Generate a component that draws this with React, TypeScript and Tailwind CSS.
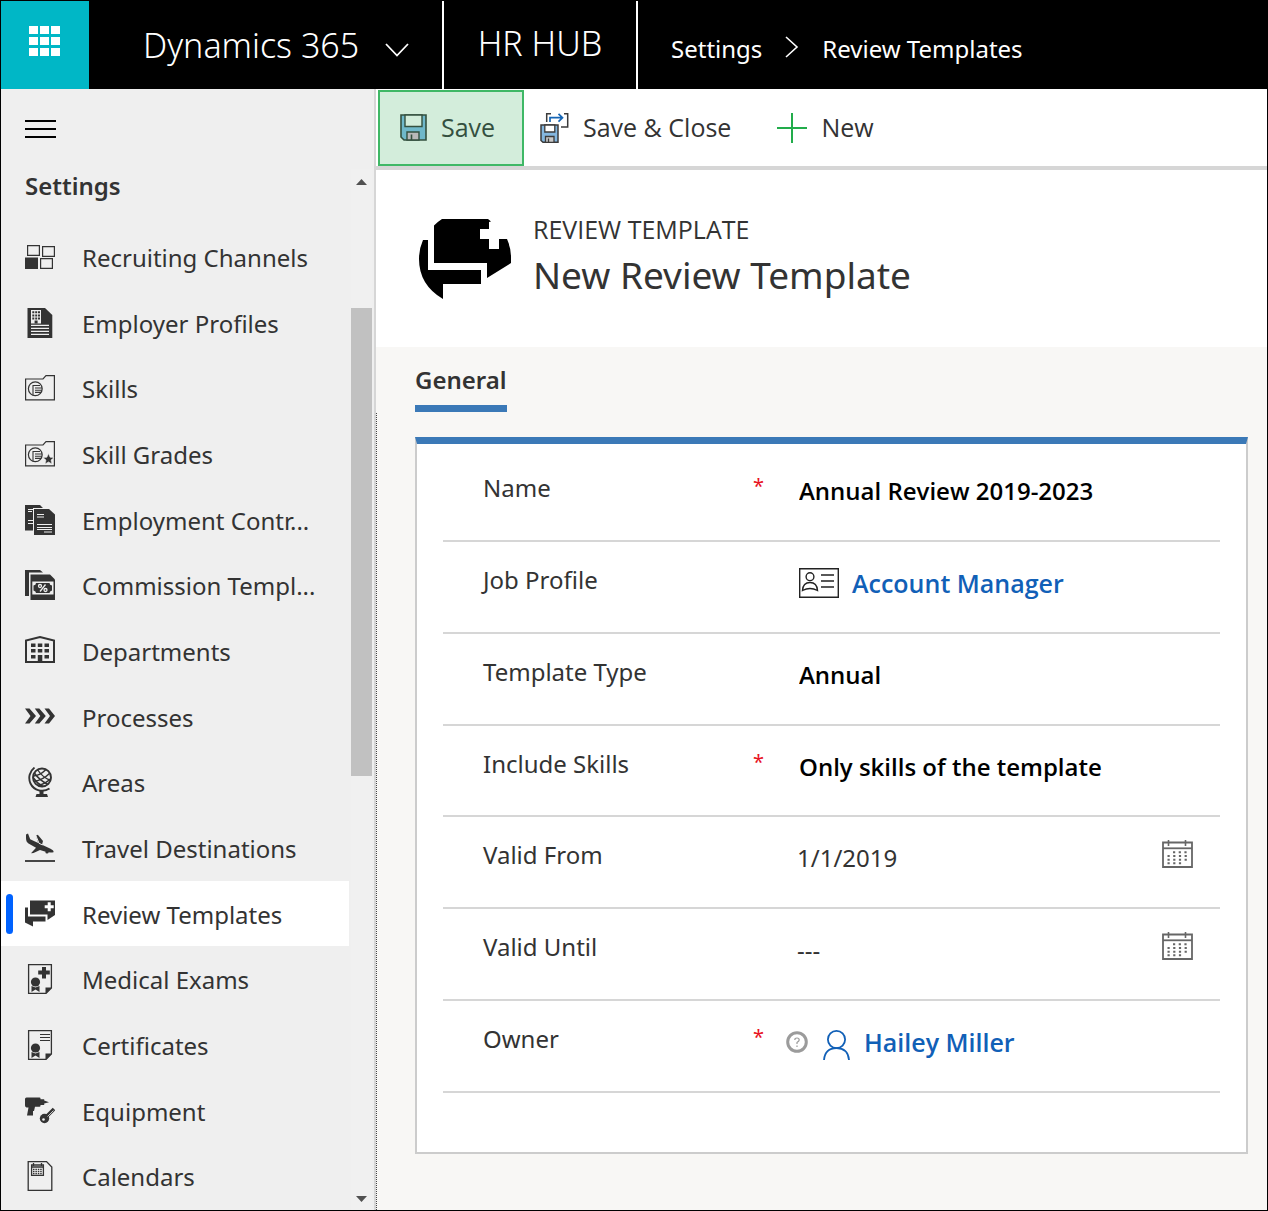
import { ReactNode } from 'react'

type NavEntry = {
  title: string
  icon: ReactNode
  active?: boolean
}

function Icon({ children }: { children: ReactNode }) {
  return (
    <svg
      width="30"
      height="30"
      viewBox="0 0 30 30"
      fill="currentColor"
      className="shrink-0"
      aria-hidden="true"
    >
      {children}
    </svg>
  )
}

function FolderShape() {
  return (
    <>
      <path
        d="M.6 6H18l3-3.300H29.400V26.800H.6z"
        fill="none"
        stroke="currentColor"
        strokeWidth="1.200"
      />
      <circle
        cx="10.300"
        cy="15.800"
        r="6.900"
        fill="none"
        stroke="currentColor"
        strokeWidth="1.200"
      />
      <path
        d="M8 22V12.500H15M10 15h7M10 17.200h7M10 19.400h6"
        fill="none"
        stroke="currentColor"
        strokeWidth="1.100"
      />
    </>
  )
}

function RibbonPage({ children }: { children: ReactNode }) {
  return (
    <Icon>
      <path
        d="M3.600.6H26.400V24L21 29.400H3.600z"
        fill="none"
        stroke="currentColor"
        strokeWidth="1.300"
      />
      <path d="M27 23.500h-6.500V30z" />
      <circle cx="10.500" cy="18" r="4.600" />
      <path d="M6.500 22l4 1.500 4-1.500v6l-4-2.500-4 2.500z" />
      {children}
    </Icon>
  )
}

const entries: NavEntry[] = [
  {
    title: 'Recruiting Channels',
    icon: (
      <Icon>
        <g fill="none" stroke="currentColor" strokeWidth="1.200">
          <path d="M2.600 3.600H14.400V13.400H2.600zM17.600 4.600H29.400V14.400H17.600zM15.600 16.600H27.400V26.400H15.600z" />
        </g>
        <path d="M0 15.500H13V27H0z" />
      </Icon>
    ),
  },
  {
    title: 'Employer Profiles',
    icon: (
      <Icon>
        <path d="M2.500 0H20l7.300 7V30H2.500z" />
        <path d="M6 2H16V15.500H6z" fill="#efefef" />
        <path d="M7.300 3.300h2v2h-2zM10.200 3.300h2v2h-2zM13 3.300h2v2h-2zM7.300 6.400h2v2h-2zM10.200 6.400h2v2h-2zM13 6.400h2v2h-2zM7.300 9.500h2v2h-2zM10.200 9.500h2v2h-2zM13 9.500h2v2h-2zM9.600 12.500h3v3h-3z" />
        <path
          d="M6 17.300H24M6 20.300H24M6 23.300H24M6 26.300H24"
          stroke="#efefef"
          strokeWidth="1.200"
        />
      </Icon>
    ),
  },
  {
    title: 'Skills',
    icon: (
      <Icon>
        <FolderShape />
      </Icon>
    ),
  },
  {
    title: 'Skill Grades',
    icon: (
      <Icon>
        <FolderShape />
        <path
          d="M23.500 14.500l1.600 3.700 4 .3-3.100 2.600 1 3.900-3.500-2.100-3.500 2.100 1-3.900-3.100-2.600 4-.3z"
          stroke="#efefef"
          strokeWidth=".6"
        />
      </Icon>
    ),
  },
  {
    title: 'Employment Contr...',
    icon: (
      <Icon>
        <path d="M0 0H15l3 3H8V25.500H0z" />
        <path d="M9 4H24l6 5.500V30H9z" />
        <path
          d="M3 4.500h5M3 6.500h4M3 15.500h5M3 18.500h5M12 9.500h7M12 12h7M12 19.500H27M12 22.500H27M12 24.500H27M19 27h8"
          stroke="#efefef"
        />
      </Icon>
    ),
  },
  {
    title: 'Commission Templ...',
    icon: (
      <Icon>
        <path d="M0 0H15l3 2.500H4V26H0z" />
        <path d="M5.500 4.500H25l5 5V30H5.500z" />
        <path d="M7.300 11.500H28.500V24.500H7.300z" fill="#efefef" />
        <path d="M11 13H24.500q0 2 2.500 2.500v5q-2.500.5-2.500 2.500H11q0-2-2.500-2.500v-5q2.500-.5 2.500-2.500z" />
        <g fill="none" stroke="#efefef" strokeWidth="1.300">
          <circle cx="15" cy="16" r="1.500" />
          <circle cx="20.500" cy="20" r="1.500" />
          <path d="M20.500 14.500l-5.500 7" />
        </g>
      </Icon>
    ),
  },
  {
    title: 'Departments',
    icon: (
      <Icon>
        <path
          d="M1 26V4.500L15 1l14 3.500V26z"
          fill="none"
          stroke="currentColor"
          strokeWidth="2"
        />
        <path d="M6 7.500h4.500V11H6zM12.800 7.500h4.500V11h-4.500zM19.500 7.500H24V11h-4.500zM6 13h4.500v3.500H6zM12.800 13h4.500v3.500h-4.500zM19.500 13H24v3.500h-4.500zM6 19h4.500v3.500H6zM12.800 19h4.500v7h-4.500zM19.500 19H24v3.500h-4.500z" />
      </Icon>
    ),
  },
  {
    title: 'Processes',
    icon: (
      <Icon>
        <path d="M0 6.500h4.500L11 14l-6.500 7.500H0L5.500 14zM9.800 6.500h4.500l6.500 7.500-6.500 7.500H9.800l5.500-7.500zM19.500 6.500H24L30 14l-6 7.500h-4.500L25 14z" />
      </Icon>
    ),
  },
  {
    title: 'Areas',
    icon: (
      <Icon>
        <g fill="none" stroke="currentColor">
          <circle cx="17" cy="10.500" r="9" strokeWidth="1.900" />
          <path
            d="M9.500.6A13 13 0 0 0 5.500 16.500A13 13 0 0 0 24.500 21.500"
            strokeWidth="1.900"
          />
          <path
            d="M9 5.500Q14 13 23 17.500M12.500 2.500Q17 10 25.500 13.500M8.500 11Q12 16.500 18 19.500"
            strokeWidth="1.400"
          />
          <path
            d="M8.500 9Q15 8.500 21 2.500M9 14.500Q18 13 25 6M13 18.500Q20 17 26 11.500"
            strokeWidth="1.500"
          />
        </g>
        <path d="M14.500 23.500h4v3.500H22l1 3H10.500l1-3h3z" />
      </Icon>
    ),
  },
  {
    title: 'Travel Destinations',
    icon: (
      <Icon>
        <path d="M1 1.500l2-1 2.200 5.700 8 3.800L11 2.800l1.800-1L18 8l-1 3.800 8.500 3.900q3.700 1.800 3 3.600-4.500.8-9.500-1L15 17l-6.500 3-2.500.2 5-5.500L3.500 10.500Q1 9 1 5z" />
        <path d="M11 2.800L14 10.300l3.500 1.600" stroke="#efefef" fill="none" />
        <circle cx="22" cy="19" r="1.600" />
        <path d="M0 28H30" stroke="currentColor" strokeWidth="1.800" />
      </Icon>
    ),
  },
  {
    title: 'Review Templates',
    active: true,
    icon: (
      <Icon>
        <path d="M5 1.500H30V16l-7.500 5V15.500H5z" />
        <path d="M0 8.500h3V17.500H20.500V22.500H8v5L0 23.500z" />
        <path d="M22.700 3.200h3v3h3v3h-3v3h-3v-3h-3v-3h3z" fill="#fff" />
      </Icon>
    ),
  },
  {
    title: 'Medical Exams',
    icon: (
      <RibbonPage>
        <path d="M17 3h4v3.500h3.800v4H21v4h-4v-4h-3.800v-4H17z" />
      </RibbonPage>
    ),
  },
  {
    title: 'Certificates',
    icon: (
      <RibbonPage>
        <path
          d="M15 4.500H25M15 7.500H25M15 10.500H25"
          stroke="currentColor"
          strokeWidth="1.200"
        />
      </RibbonPage>
    ),
  },
  {
    title: 'Equipment',
    icon: (
      <Icon>
        <path d="M0 3q0-1.500 1.500-1.500H14.500q1 0 1 1v.7h3.700v1.400L24 6.300l-4.800 1.300V9h-3.700v.8q0 1-1 1H10L9 15H8v4.500H2L3.500 11.500H1.500Q0 11 0 9.500z" />
        <circle cx="19.500" cy="22.500" r="4.700" />
        <path d="M22 20L29 13" stroke="currentColor" strokeWidth="3.500" />
        <path d="M22.500 20.500L28.500 14.500" stroke="#efefef" strokeWidth=".8" />
        <circle cx="18.500" cy="23.500" r="1.300" fill="#efefef" />
      </Icon>
    ),
  },
  {
    title: 'Calendars',
    icon: (
      <Icon>
        <path
          d="M3.200.6H21.500L26.800 6V29.400H3.200z"
          fill="none"
          stroke="currentColor"
          strokeWidth="1.300"
        />
        <path
          d="M6.600 4H18.400V14.400H6.600zM6.600 6H18.400M8.500 2V5M16.500 2V5"
          fill="none"
          stroke="currentColor"
          strokeWidth="1.300"
        />
        <path
          d="M8 8.300h9.500M8 10.400h9.500M8 12.500h9.500"
          stroke="currentColor"
          strokeWidth="1.300"
          strokeDasharray="1.500 .9"
        />
      </Icon>
    ),
  },
]

function SaveIcon() {
  return (
    <svg width="28" height="28" viewBox="0 0 28 28" aria-hidden="true">
      <path
        d="M1 1H26V26H4L1 23z"
        fill="#6fb8ca"
        stroke="#34503f"
        strokeWidth="1.600"
      />
      <path d="M5 1H22V12.500H5z" fill="#d3eddb" stroke="#34503f" strokeWidth="1.400" />
      <path d="M7 18H19V26H7z" fill="#b9b9b9" stroke="#34503f" strokeWidth="1.400" />
      <path d="M11.500 20.500V26" stroke="#34503f" strokeWidth="1.600" />
    </svg>
  )
}

function SaveCloseIcon() {
  return (
    <svg width="30" height="30" viewBox="0 0 30 30" fill="none" aria-hidden="true">
      <path
        d="M6.700 9V.800H11M24 .800h3.700V14H21"
        stroke="#3b3b3b"
        strokeWidth="1.500"
      />
      <path
        d="M10 9V4.700H22.500M18.500.800l4 3.900-4 3.900"
        stroke="#1565b5"
        strokeWidth="1.700"
      />
      <path d="M1 12H18V29.300H3L1 27.500z" fill="#84b7e0" stroke="#3b3b3b" strokeWidth="1.500" />
      <path d="M4.800 12H14.800V19H4.800z" fill="#fff" stroke="#3b3b3b" strokeWidth="1.300" />
      <path d="M5.500 23.500H14V29.300H5.500z" fill="#c8c8c8" stroke="#3b3b3b" strokeWidth="1.300" />
      <path d="M8.500 25.500v4" stroke="#3b3b3b" strokeWidth="1.300" />
    </svg>
  )
}

function CalendarIcon() {
  return (
    <svg width="31" height="28" viewBox="0 0 31 28" fill="none" stroke="#666" aria-hidden="true">
      <path d="M1 2.500H30V27H1z" strokeWidth="1.800" />
      <path d="M1 8.300H30" strokeWidth="1.800" />
      <path d="M6.500 0V6M23.500 0V6" strokeWidth="1.600" />
      <path
        d="M11 12.300H26M5.500 16H26M5.500 19.700H26M5.500 23.300H20"
        strokeWidth="2"
        strokeDasharray="2.200 3.500"
      />
    </svg>
  )
}

function Field({
  id,
  label,
  required,
  children,
}: {
  id: string
  label: string
  required?: boolean
  children: ReactNode
}) {
  return (
    <div className="flex flex-1 items-center border-b-2 border-[#d6d6d6] pb-3.5">
      <label htmlFor={id} className="w-[270px] shrink-0 pl-10 text-[#333]">
        {label}
      </label>
      <span className="w-[84px] shrink-0 pb-1 pl-10 text-xl text-[#e81123]">
        {required && '*'}
      </span>
      <div className="flex min-w-0 flex-1 items-center pt-1.5">{children}</div>
    </div>
  )
}

const valueClass =
  "w-full appearance-none bg-transparent pl-0.5 font-['Open_Sans',sans-serif] font-semibold text-black outline-none"

const linkClass =
  "font-['Open_Sans',sans-serif] text-[25px] leading-8 font-semibold text-[#1160b7]"

export default function App() {
  return (
    <div className="flex min-h-screen flex-col border border-black bg-white font-['Noto_Sans','Open_Sans',sans-serif] text-2xl text-[#333]">
      <header className="flex h-[88px] shrink-0 bg-black text-white">
        <button
          aria-label="Apps"
          className="flex w-[88px] items-center justify-center bg-[#00b7c6] pr-0.5 pb-2"
        >
          <svg width="31" height="30" viewBox="0 0 31 30" fill="#fff">
            <path d="M0 0h9v8H0zM11 0h9v8h-9zM22 0h9v8h-9zM0 11h9v8H0zM11 11h9v8h-9zM22 11h9v8h-9zM0 22h9v8H0zM11 22h9v8h-9zM22 22h9v8h-9z" />
          </svg>
        </button>
        <button className="flex w-[355px] items-center gap-[26px] border-r-2 border-white pt-0.5 pl-[54px] text-[34px] font-light">
          Dynamics 365
          <svg width="24" height="14" viewBox="0 0 24 14" fill="none" stroke="#fff" strokeWidth="1.800" className="mt-2">
            <path d="M1 1l11 11.500L23 1" />
          </svg>
        </button>
        <div className="flex w-[194px] items-center justify-center border-r-2 border-white pb-0.5 text-[34px] font-light">
          HR HUB
        </div>
        <nav className="flex items-center gap-[23px] pt-2 pl-[33px]" aria-label="Breadcrumb">
          <a href="#settings">Settings</a>
          <svg width="14" height="22" viewBox="0 0 14 22" fill="none" stroke="#fff" strokeWidth="1.600" className="mb-1">
            <path d="M1 1l11 10L1 21" />
          </svg>
          <a href="#templates">Review Templates</a>
        </nav>
      </header>

      <div className="flex flex-1">
        <aside className="flex w-[375px] shrink-0 flex-col border-r-2 border-[#d6d6d6] bg-[#efefef]">
          <div className="flex h-20 shrink-0 items-center pl-6">
            <button aria-label="Menu">
              <svg width="31" height="18" viewBox="0 0 31 18" stroke="#000" strokeWidth="2">
                <path d="M0 1H31M0 9H31M0 17H31" />
              </svg>
            </button>
          </div>
          <div className="flex flex-1">
            <nav className="flex w-[348px] flex-col pb-px">
              <h2 className="h-[55px] pt-px pl-6 font-semibold">Settings</h2>
              {entries.map(({ title, icon, active }) => (
                <a
                  key={title}
                  href="#nav"
                  className={
                    active
                      ? 'flex flex-1 items-center bg-white pl-[5px]'
                      : 'flex flex-1 items-center pl-6'
                  }
                >
                  {active && (
                    <span className="mr-3 h-10 w-[7px] rounded bg-[#0062ff]" />
                  )}
                  {icon}
                  <span className="pt-0.5 pl-[27px] whitespace-nowrap">{title}</span>
                </a>
              ))}
            </nav>
            <div className="ml-0.5 flex w-[21px] flex-col items-center bg-[#f0f0f0] pt-2.5 pb-2">
              <svg width="11" height="6" viewBox="0 0 11 6" fill="#505050">
                <path d="M0 6L5.500 0 11 6z" />
              </svg>
              <div className="mt-[123px] h-[468px] w-full bg-[#c1c1c1]" />
              <svg width="11" height="6" viewBox="0 0 11 6" fill="#505050" className="mt-auto">
                <path d="M0 0L5.500 6 11 0z" />
              </svg>
            </div>
          </div>
        </aside>

        <main className="flex min-w-0 flex-1 flex-col bg-[#f8f7f5]">
          <div className="flex h-[81px] shrink-0 items-start border-b-4 border-[#d6d6d6] bg-white pt-px pl-0.5 font-['Open_Sans',sans-serif] text-[25px]">
            <button className="flex h-[76px] w-[146px] items-center gap-[13px] border-2 border-[#3fb866] bg-[#d3eddb] pl-5 text-[#34503f]">
              <SaveIcon />
              Save
            </button>
            <button className="ml-4 flex h-[76px] items-center gap-[13px]">
              <SaveCloseIcon />
              Save &amp; Close
            </button>
            <button className="ml-[46px] flex h-[76px] items-center gap-[14px]">
              <svg width="30" height="30" viewBox="0 0 30 30" stroke="#22ac4b" strokeWidth="2">
                <path d="M15 0V30M0 15H30" />
              </svg>
              New
            </button>
          </div>

          <div className="flex h-[177px] shrink-0 items-center gap-[22px] bg-white pl-[43px]">
            <svg width="92" height="80" viewBox="0 0 92 80" aria-hidden="true">
              <path d="M15 6.500Q19 2.500 23 0H69L72 2.500 70 3V10H61V20H70V30H80V20H88Q92 29 92 38V44L68 59V44H15z" />
              <path d="M4 21H9V51H62V65H24V80Q0 66 0 40Q0 30 4 21z" />
            </svg>
            <div>
              <p className="font-['Open_Sans',sans-serif] text-[25px] leading-8">REVIEW TEMPLATE</p>
              <h1 className="text-[37px] leading-[60px]">New Review Template</h1>
            </div>
          </div>

          <div className="flex h-[66px] shrink-0 items-start pt-4 pl-[39px]" role="tablist">
            <button
              role="tab"
              aria-selected="true"
              className="h-[49px] border-b-[7px] border-[#3b79b7] pb-2 font-semibold"
            >
              General
            </button>
          </div>

          <div className="flex flex-1 flex-col border-l border-dotted border-[#444] pt-6 pr-[19px] pb-14 pl-[38px]">
            <form className="flex flex-1 flex-col border-2 border-t-[7px] border-[#ccc] border-t-[#3b79b7] bg-white px-[26px] pt-1.5 pb-[59px]">
              <Field id="name" label="Name" required>
                <input id="name" className={valueClass} defaultValue="Annual Review 2019-2023" />
              </Field>
              <Field id="job" label="Job Profile">
                <svg width="40" height="30" viewBox="0 0 40 30" fill="none" stroke="#222" strokeWidth="1.400" className="mr-[13px] ml-0.5 shrink-0">
                  <path d="M.7.700H39.300V29.300H.7z" />
                  <circle cx="11" cy="8.700" r="3.900" />
                  <path d="M3.500 22.500Q4 14.500 11 14.500T18.500 22.500Q11 18.500 3.500 22.500z" />
                  <path d="M22 7H35M22 13H35M22 19H35" />
                </svg>
                <a id="job" href="#job" className={linkClass}>
                  Account Manager
                </a>
              </Field>
              <Field id="type" label="Template Type">
                <select id="type" className={valueClass}>
                  <option>Annual</option>
                </select>
              </Field>
              <Field id="skills" label="Include Skills" required>
                <select id="skills" className={valueClass}>
                  <option>Only skills of the template</option>
                </select>
              </Field>
              <Field id="from" label="Valid From">
                <input id="from" className="w-full min-w-0 outline-none" defaultValue="1/1/2019" />
                <button type="button" aria-label="Pick start date" className="mr-[27px] shrink-0 pb-2">
                  <CalendarIcon />
                </button>
              </Field>
              <Field id="until" label="Valid Until">
                <input id="until" className="w-full min-w-0 outline-none" defaultValue="---" />
                <button type="button" aria-label="Pick end date" className="mr-[27px] shrink-0 pb-2">
                  <CalendarIcon />
                </button>
              </Field>
              <Field id="owner" label="Owner" required>
                <svg width="22" height="22" viewBox="0 0 22 22" fill="none" stroke="#9b9b9b" className="mr-[15px] -ml-[11px] shrink-0">
                  <circle cx="11" cy="11" r="9.300" strokeWidth="3" />
                  <path d="M8.800 9Q8.800 7 11 7T13.200 9Q13.200 10 11 11.500V13M11 14.500V16" strokeWidth="1.200" />
                </svg>
                <svg width="27" height="30" viewBox="0 0 27 30" fill="none" stroke="#1160b7" strokeWidth="1.800" className="mt-1.5 mr-3.5 shrink-0">
                  <circle cx="13.500" cy="9.500" r="8.600" />
                  <path d="M1 30Q2 18.200 13.500 18.200T26 30" />
                </svg>
                <a id="owner" href="#owner" className={linkClass}>
                  Hailey Miller
                </a>
              </Field>
            </form>
          </div>
        </main>
      </div>
    </div>
  )
}
